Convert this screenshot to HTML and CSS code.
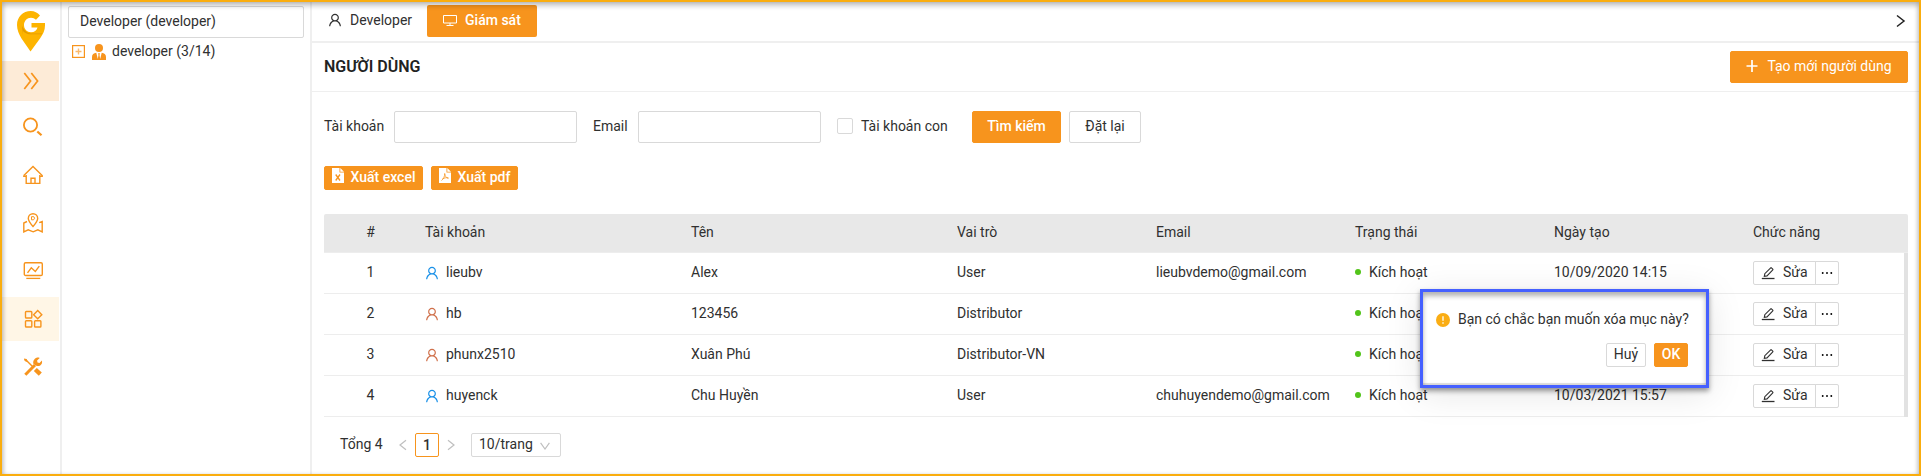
FILE: index.html
```html
<!DOCTYPE html>
<html lang="vi">
<head>
<meta charset="utf-8">
<title>Người dùng</title>
<link rel="stylesheet" href="styles.css">
</head>
<body>
<svg class="defs" width="0" height="0">
  <symbol id="user" viewBox="64 64 896 896"><path d="M858.5 763.6a374 374 0 00-80.6-119.5 375.63 375.63 0 00-119.5-80.6c-.4-.2-.8-.3-1.2-.5C719.5 518 760 444.7 760 362c0-137-111-248-248-248S264 225 264 362c0 82.700 40.500 156 102.800 201.100-.4.2-.8.3-1.200.5-44.800 18.900-85 46-119.500 80.600a375.630 375.630 0 00-80.600 119.500A371.700 371.700 0 00136 901.800a8 8 0 008 8.200h60c4.400 0 7.900-3.500 8-7.800 2-77.200 33-149.500 87.800-204.300 56.700-56.700 132-87.900 212.200-87.900s155.500 31.200 212.200 87.900C779 752.700 810 825 812 902.200c.1 4.400 3.600 7.800 8 7.800h60a8 8 0 008-8.200c-1-47.800-10.900-94.300-29.500-138.200zM512 534c-45.900 0-89.100-17.900-121.600-50.400S340 407.900 340 362c0-45.900 17.900-89.100 50.400-121.600S466.100 190 512 190s89.100 17.900 121.600 50.400S684 316.100 684 362c0 45.900-17.900 89.100-50.400 121.600S557.900 534 512 534z"/></symbol>
  <symbol id="edit" viewBox="0 0 14 14"><path d="M.8 12.500h12.700" stroke="currentColor" stroke-width="1.300"/><path d="M3.300 10.400l.5-2.700 5.900-5.900a.5.5 0 0 1 .7 0l1.400 1.400a.5.5 0 0 1 0 .7L6 9.900z" fill="none" stroke="currentColor" stroke-width="1.100"/></symbol>
  <symbol id="dots" viewBox="0 0 12 12"><circle cx="1.700" cy="6" r=".95"/><circle cx="6" cy="6" r=".95"/><circle cx="10.300" cy="6" r=".95"/></symbol>
</svg>
<div class="app">
  <nav class="rail">
    <div class="logo">
      <svg width="28" height="41" viewBox="0 0 28 41"><path fill="#fdb400" d="M23 4.500C20.500 1.500 17.500 0 13.800 0 6 0 0 6 0 14c0 5 2 9 4.500 13.500L13.500 40.500 23 27.500c3-4.500 5-8 5-13V12H14.500v4.500h6c-.8 3-3 4.700-6.500 4.700-4 0-7-3-7-7.200s3-7.300 7-7.300c2 0 3.600.7 5 2z"/><path fill="#d99200" d="M5 15l1 9v-4c2 2.500 5 3.300 8 3.300h11v-.8H16c-5 0-8-1.500-11-7.500z" opacity=".75"/></svg>
    </div>
    <a class="collapse"><svg class="ln" width="18" height="18" viewBox="0 0 18 18"><path d="M1.300 1l6.300 8-6.300 8M8.300 1l6.300 8-6.300 8" stroke-width="1.700"/></svg></a>
    <a class="item"><svg class="ln" width="20" height="20" viewBox="0 0 20 20"><circle cx="7.500" cy="8" r="6.600" stroke-width="1.800"/><path d="M14.300 14.500l4.200 3.800" stroke-width="2.200"/></svg></a>
    <a class="item"><svg class="ln" width="20" height="20" viewBox="0 0 20 20"><path d="M3.200 10v8.400h13.600V10M.8 10.500L10 1.500l9.200 9v.9h-2.400M.8 10.500v.9h2.400M8 18.400v-5.200h4v5.200" stroke-width="1.400"/></svg></a>
    <a class="item"><svg class="ln" width="20" height="20" viewBox="0 0 20 20"><path d="M10 13.500C7 10 5.300 8 5.300 5.400a4.700 4.700 0 0 1 9.400 0C14.700 8 13 10 10 13.500z" stroke-width="1.400"/><path d="M8.500 3.700h2.300l.8 1.500-1 1.600H8.500z" stroke-width="1"/><path d="M4 8.500L.8 10v8.800l4.400-2 5 2 4.600-2 4.400 2V8.500l-3 1.200" stroke-width="1.400"/></svg></a>
    <a class="item"><svg class="ln" width="20" height="20" viewBox="0 0 20 20"><rect x="1.300" y="1.700" width="18" height="12.800" rx="1.300" stroke-width="1.400"/><path d="M4.500 11.800l3.800-5 4 3.700 4-5.300" stroke-width="1.400"/><path d="M3.300 17.400h14" stroke-width="1.300"/></svg></a>
    <a class="item active"><svg class="ln" width="20" height="20" viewBox="0 0 20 20"><g stroke-width="1.400"><rect x="2.500" y="2.500" width="6.300" height="6.500" rx=".8"/><rect x="2.500" y="11.700" width="6.300" height="6.300" rx=".8"/><rect x="11.600" y="11.700" width="6.300" height="6.300" rx=".8"/><path d="M14.700 1.600l4.100 4.100-4.100 4.100-4.100-4.100z"/></g></svg></a>
    <a class="item"><svg class="ln" width="20" height="20" viewBox="0 0 20 20"><path d="M2.500 2.500l8 8" stroke-width="1.400"/><path d="M1 1.500l2.600.4.8 2.200-1.200.9L1.200 3.300z" fill="currentColor" stroke="none"/><path d="M12.300 12.500l5 4.700" stroke-width="4.400"/><path d="M2.300 17.700L12 8" stroke-width="3"/><path fill="currentColor" stroke="none" d="M16.700.9l-2.600 2.600.4 2 2 .4 2.400-2.400c.6 2.200-.1 4-1.700 5-1.400.8-3 .8-4.300.1L10.500 7c-.6-1.600-.3-3.300.8-4.600C12.700.8 14.700.2 16.700.9z"/></svg></a>
  </nav>

  <aside class="tree">
    <div class="tree-input">Developer (developer)</div>
    <div class="tree-row">
      <svg width="13" height="13" viewBox="0 0 13 13" fill="none" stroke="#f7941d"><rect x=".6" y=".6" width="11.800" height="11.800" stroke-width="1.200"/><path d="M6.500 3.500v6M3.500 6.500h6" stroke-width="1.400" opacity=".65"/></svg>
      <svg class="person" width="14" height="16" viewBox="0 0 14 16" fill="#f7941d"><circle cx="7" cy="4" r="4"/><path d="M0 16v-3c0-2.500 1.700-4 4.300-4.200L5.800 15 6.500 11 6 9.300h2L7.500 11l.7 4 1.500-6.200C12.300 9 14 10.500 14 13v3z"/></svg>
      <span>developer (3/14)</span>
    </div>
  </aside>

  <main class="main">
    <header class="tabs">
      <a class="tab"><svg class="ic" width="14" height="14"><use href="#user"/></svg>Developer</a>
      <a class="tab tab-on"><svg width="14" height="14" viewBox="0 0 14 14" fill="none" stroke="#fff" stroke-width="1"><path d="M.5 2.500h13v7.500H.5zM7 10v2.500M3.500 12.500h7"/></svg>Giám sát</a>
      <svg class="more" width="10" height="14" viewBox="0 0 10 14" fill="none" stroke="#222" stroke-width="1.500"><path d="M1 1.500l7 5.500-7 5.500"/></svg>
    </header>
    <div class="head">
      <h1>NGƯỜI DÙNG</h1>
      <button class="btn primary create"><svg width="12" height="12" viewBox="0 0 12 12" stroke="#fff" stroke-width="1.700"><path d="M6 0v12M0.500 6h11"/></svg>Tạo mới người dùng</button>
    </div>
    <div class="content">
      <form class="filters">
        <label class="l1">Tài khoản</label><span class="field"></span>
        <label class="l2">Email</label><span class="field"></span>
        <span class="check"></span><label class="l3">Tài khoản con</label>
        <button type="button" class="btn primary search">Tìm kiếm</button>
        <button type="button" class="btn reset">Đặt lại</button>
      </form>
      <div class="exports">
        <button class="btn primary sm xls"><svg width="12" height="15" viewBox="0 0 12 15"><path fill="#fff" d="M0 0h7.500v4.500H12V15H0zM8.300 0L12 3.700H8.300z"/><path d="M3.700 6.500l4.300 6M8 6.500l-4.300 6" stroke="#f7941d" stroke-width="1.300"/></svg>Xuất excel</button>
        <button class="btn primary sm pdf"><svg width="12" height="15" viewBox="0 0 12 15"><path fill="#fff" d="M0 0h7.500v4.500H12V15H0zM8.300 0L12 3.700H8.300z"/><path d="M5.600 5.500c.5 2.500 1.500 4.300 3.800 5M2.500 12.500c2-1.500 3.200-4 3.300-7M3.500 10.800c2-1 4-1.300 6-1" fill="none" stroke="#f7941d" stroke-width=".8"/></svg>Xuất pdf</button>
      </div>
      <div class="table">
        <div class="tr th"><span>#</span><span>Tài khoản</span><span>Tên</span><span>Vai trò</span><span>Email</span><span>Trạng thái</span><span>Ngày tạo</span><span>Chức năng</span></div>
        <div class="rows">
          <div class="tr"><span>1</span><span class="acc blue"><svg class="ic" width="14" height="14"><use href="#user"/></svg><b>lieubv</b></span><span>Alex</span><span>User</span><span>lieubvdemo@gmail.com</span><span class="st"><i></i>Kích hoạt</span><span>10/09/2020 14:15</span><span class="act"><a class="ed"><svg width="14" height="14"><use href="#edit"/></svg>Sửa</a><a class="dt"><svg width="12" height="12"><use href="#dots"/></svg></a></span></div>
          <div class="tr"><span>2</span><span class="acc red"><svg class="ic" width="14" height="14"><use href="#user"/></svg><b>hb</b></span><span>123456</span><span>Distributor</span><span></span><span class="st"><i></i>Kích hoạt</span><span></span><span class="act"><a class="ed"><svg width="14" height="14"><use href="#edit"/></svg>Sửa</a><a class="dt"><svg width="12" height="12"><use href="#dots"/></svg></a></span></div>
          <div class="tr"><span>3</span><span class="acc red"><svg class="ic" width="14" height="14"><use href="#user"/></svg><b>phunx2510</b></span><span>Xuân Phú</span><span>Distributor-VN</span><span></span><span class="st"><i></i>Kích hoạt</span><span></span><span class="act"><a class="ed"><svg width="14" height="14"><use href="#edit"/></svg>Sửa</a><a class="dt"><svg width="12" height="12"><use href="#dots"/></svg></a></span></div>
          <div class="tr"><span>4</span><span class="acc blue"><svg class="ic" width="14" height="14"><use href="#user"/></svg><b>huyenck</b></span><span>Chu Huyền</span><span>User</span><span>chuhuyendemo@gmail.com</span><span class="st"><i></i>Kích hoạt</span><span>10/03/2021 15:57</span><span class="act"><a class="ed"><svg width="14" height="14"><use href="#edit"/></svg>Sửa</a><a class="dt"><svg width="12" height="12"><use href="#dots"/></svg></a></span></div>
        </div>
      </div>
      <div class="pager">
        <span class="total">Tổng 4</span>
        <svg class="arr" width="8" height="12" viewBox="0 0 8 12"><path d="M7 1.300L1 6l6 4.700"/></svg>
        <span class="page">1</span>
        <svg class="arr" width="8" height="12" viewBox="0 0 8 12"><path d="M1 1.300L7 6l-6 4.700"/></svg>
        <span class="size">10/trang<svg class="arr" width="10" height="8" viewBox="0 0 10 8"><path d="M.6 .8L5 7 9.400 .8"/></svg></span>
      </div>
    </div>
  </main>

  <div class="pop">
    <div class="msg"><svg width="14" height="14" viewBox="0 0 14 14"><circle cx="7" cy="7" r="7" fill="#faad14"/><path d="M7 3.300v4.500M7 9.300v1.400" stroke="#fff" stroke-width="1.300"/></svg>Bạn có chắc bạn muốn xóa mục này?</div>
    <div class="pop-actions"><button class="btn sm">Huỷ</button><button class="btn primary sm">OK</button></div>
  </div>
</div>
</body>
</html>
```
FILE: styles.css
```css
* { box-sizing: border-box; }
body {
  margin: 0;
  font: 14px/21px Roboto, "Noto Sans", sans-serif;
  color: #303030;
  background: #fff;
  overflow: hidden;
}
svg { display: block; flex: none; }
.defs { position: absolute; }
.app {
  position: relative;
  display: flex;
  width: 1921px;
  height: 476px;
  border: 2px solid #faad0e;
}
/* inner glow of the frame, over everything it encloses */
.app::after {
  content: "";
  position: absolute;
  inset: 0;
  pointer-events: none;
  box-shadow:
    inset 0 4px 5px rgba(0, 0, 0, .22),
    inset 3px 0 4px -1px rgba(0, 0, 0, .12),
    inset -3px 0 4px -1px rgba(0, 0, 0, .12);
}

.rail {
  width: 60px;
  flex: none;
  border-right: 2px solid #efefef;
  padding-right: 1px;
  color: #f7941d;
}
.logo { height: 59px; padding: 9px 0 0 15px; }
.collapse, .item { display: flex; align-items: center; padding-left: 21px; }
.collapse { height: 40px; background: #fdebd7; margin-bottom: 4px; }
.item { height: 44px; margin-bottom: 4px; }
.item.active { background: #fff6e6; }
.ln { fill: none; stroke: currentColor; }

.tree {
  width: 250px;
  flex: none;
  border-right: 2px solid #efefef;
  padding: 4px 6px 0;
}
.tree-input {
  height: 32px;
  border: 1px solid #d9d9d9;
  border-radius: 2px;
  padding: 4px 11px;
}
.tree-row { display: flex; align-items: center; height: 27px; padding-left: 4px; }
.person { margin: 0 6px 0 7px; }

.main { flex: 1; min-width: 0; }
.tabs {
  display: flex;
  align-items: flex-start;
  height: 41px;
  border-bottom: 2px solid #efefef;
  padding: 3px 13px 0 0;
}
.tab { display: flex; align-items: center; gap: 8px; height: 30px; padding-left: 16px; }
.tab-on {
  height: 32px;
  width: 110px;
  margin-left: 15px;
  padding-bottom: 2px;
  color: #fff;
  background: #f7941d;
  border-radius: 2px;
  font-weight: 500;
}
.ic { fill: currentColor; }
.more { margin: 9px 0 0 auto; }
.head {
  display: flex;
  align-items: center;
  justify-content: space-between;
  height: 49px;
  border-bottom: 1px solid #efefef;
  padding: 0 11px 0 12px;
}
h1 { margin: 0; font-size: 16px; font-weight: 600; line-height: 24px; color: #222; }
.btn {
  display: flex;
  align-items: center;
  justify-content: center;
  height: 32px;
  padding: 0 0 2px;
  font: inherit;
  color: #303030;
  background: #fff;
  border: 1px solid #d9d9d9;
  border-radius: 2px;
}
.btn.primary { color: #fff; background: #f7941d; border-color: #f7941d; font-weight: 500; }
.btn.sm { height: 24px; }
.head .btn.create { width: 178px; gap: 9px; font-weight: 400; }

.content { padding: 19px 11px 0 12px; }
.filters { display: flex; align-items: center; height: 32px; }
.filters label { padding-bottom: 2px; white-space: nowrap; }
.l1 { width: 70px; }
.l2 { width: 45px; margin-left: 16px; }
.field { width: 183px; height: 32px; border: 1px solid #d9d9d9; border-radius: 2px; }
.check { width: 16px; height: 16px; margin: 0 8px 2px 16px; border: 1px solid #d9d9d9; border-radius: 2px; }
.l3 { width: 111px; }
.search { width: 89px; }
.reset { width: 72px; margin-left: 8px; }

.exports { display: flex; gap: 8px; margin-top: 23px; }
.exports .btn { gap: 7px; }
.exports svg { margin-bottom: 3px; }
.xls { width: 99px; }
.pdf { width: 87px; }

.table { margin-top: 24px; }
.tr {
  display: grid;
  grid-template-columns: 93px 266px 266px 199px 199px 199px 199px 159px;
  align-items: center;
  width: 1580px;
  height: 41px;
  border-bottom: 1px solid #ededed;
}
.tr > span { padding: 0 0 2px 8px; white-space: nowrap; }
.tr > span:first-child { padding-left: 0; text-align: center; }
.th { width: 100%; height: 39px; background: #e8e8e8; border-radius: 2px 2px 0 0; }
.rows { border-right: 4px solid #e2e2e2; }
.acc, .st { display: flex; align-items: center; }
.acc b { font-weight: 400; margin-left: 7px; }
.acc .ic { margin-top: 2px; }
.blue .ic { fill: #1890e8; }
.red .ic { fill: #d0704a; }
.st i { width: 6px; height: 6px; margin-right: 8px; border-radius: 50%; background: #52c41a; }
.tr > .act { display: flex; padding-bottom: 0; }
.ed, .dt {
  display: flex;
  align-items: center;
  height: 24px;
  border: 1px solid #d9d9d9;
}
.ed { width: 61px; padding: 0 0 2px 7px; gap: 8px; border-radius: 2px 0 0 2px; }
.ed svg { margin-top: 2px; }
.dt { width: 24px; padding-right: 1px; justify-content: center; margin-left: -1px; border-radius: 0 2px 2px 0; }
.ed { width: 63px; }

.pager { display: flex; align-items: center; height: 24px; margin: 16px 0 0 16px; }
.total { width: 59px; padding-bottom: 2px; }
.arr { fill: none; stroke: #bfbfbf; stroke-width: 1.2; }
.page {
  width: 24px;
  height: 24px;
  margin: 0 8px;
  border: 1px solid #f7941d;
  border-radius: 2px;
  text-align: center;
  font-weight: 500;
  line-height: 23px;
}
.size {
  display: flex;
  align-items: center;
  width: 90px;
  height: 24px;
  margin-left: 16px;
  padding: 0 0 2px 7px;
  gap: 7px;
  border: 1px solid #d9d9d9;
  border-radius: 2px;
}
.size .arr { margin-top: 3px; }

/* confirmation popover floating over the table */
.pop {
  position: absolute;
  left: 1418px;
  top: 287px;
  width: 289px;
  height: 99px;
  padding: 17px 18px 0 13px;
  background: #fff;
  border: 3px solid #4560ff;
  box-shadow:
    0 3px 5px rgba(0, 0, 0, .4),
    0 6px 36px rgba(0, 0, 0, .1),
    inset 0 -2px 1px rgba(0, 0, 0, .15),
    inset 0 4px 5px rgba(0, 0, 0, .3);
}
.msg { display: flex; align-items: center; gap: 8px; height: 21px; white-space: nowrap; }
.pop-actions { display: flex; justify-content: flex-end; gap: 8px; margin-top: 13px; }
.pop-actions .btn { width: 40px; }
.pop-actions .primary { width: 34px; }
```
